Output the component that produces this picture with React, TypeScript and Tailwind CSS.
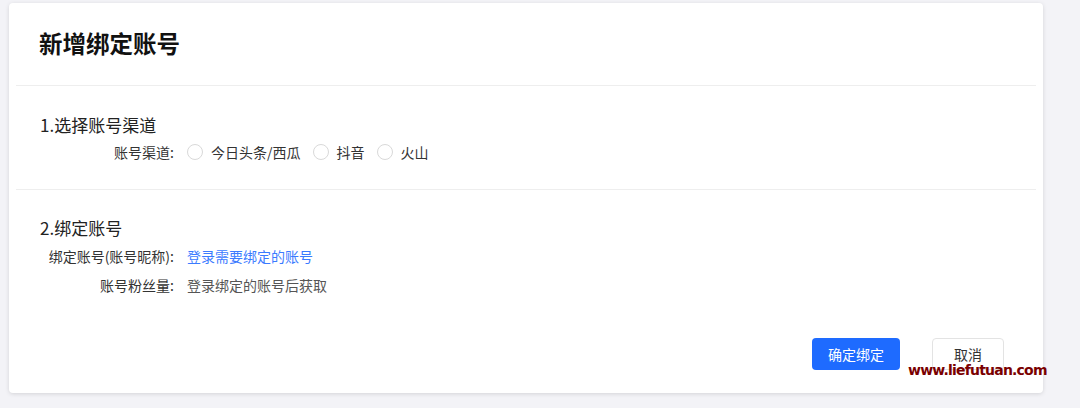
import React, { useState } from 'react';

const channels = ['今日头条/西瓜', '抖音', '火山'];

const Radio = ({ label, checked, onClick }: { label: string; checked: boolean; onClick: () => void }) => (
  <button type="button" onClick={onClick} className="flex items-center gap-2 text-[14px] text-[#333]">
    <span
      className={
        checked
          ? 'w-4 h-4 rounded-full border-[5px] border-[#1f6dff] bg-white'
          : 'w-4 h-4 rounded-full border border-[#d9d9d9] bg-white'
      }
    />
    <span>{label}</span>
  </button>
);

const App = () => {
  const [channel, setChannel] = useState<string | null>(null);

  return (
    <div
      className="relative w-[1080px] h-[408px] bg-[#f3f3f7] pt-[3px] pl-[9px]"
      style={{ fontFamily: '"Noto Sans CJK SC", "Noto Sans", sans-serif' }}
    >
      <div className="w-[1034px] h-[390px] bg-white rounded-[4px] shadow-[0_1px_4px_rgba(0,0,0,0.13)] flex flex-col">
        {/* Header */}
        <div className="h-[82px] px-[30px] flex items-center">
          <h1 className="text-[23.5px] font-bold text-[#111]">新增绑定账号</h1>
        </div>
        <div className="mx-[7px] h-px bg-[#eeeeee]" />

        {/* Step 1 */}
        <div className="mx-[7px] px-6 pt-[27px] pb-[27px]">
          <h2 className="text-[17px] leading-6 text-[#222]">1.选择账号渠道</h2>
          <div className="mt-[5px] h-5 flex items-center">
            <div className="w-[147px] pr-[13px] text-right text-[14px] text-[#333]">账号渠道:</div>
            <div className="flex items-center gap-3">
              {channels.map(c => (
                <Radio key={c} label={c} checked={channel === c} onClick={() => setChannel(c)} />
              ))}
            </div>
          </div>
        </div>
        <div className="mx-[7px] h-px bg-[#eeeeee]" />

        {/* Step 2 */}
        <div className="mx-[7px] px-6 pt-[26px]">
          <h2 className="text-[17px] leading-6 text-[#222]">2.绑定账号</h2>
          <div className="mt-[6px] h-5 flex items-center text-[14px]">
            <div className="w-[147px] pr-[13px] text-right text-[#333] whitespace-nowrap">绑定账号(账号昵称):</div>
            <a href="#" className="text-[#3b7bff]">登录需要绑定的账号</a>
          </div>
          <div className="mt-[9px] h-5 flex items-center text-[14px]">
            <div className="w-[147px] pr-[13px] text-right text-[#333]">账号粉丝量:</div>
            <span className="text-[#555]">登录绑定的账号后获取</span>
          </div>
          <div className="mt-[43px] pr-2 flex justify-end gap-8">
            <button type="button" className="w-[88px] h-8 rounded-[4px] bg-[#1e6bff] text-white text-[14px]">
              确定绑定
            </button>
            <button type="button" className="w-[72px] h-8 rounded-[4px] border border-[#e3e3e3] bg-white text-[#333] text-[14px]">
              取消
            </button>
          </div>
        </div>
      </div>

      {/* Watermark */}
      <div
        className="absolute left-[908px] top-[360px] text-[14px] leading-5 font-bold tracking-[-0.8px] text-[#7a0000]"
        style={{ fontFamily: '"DejaVu Sans", sans-serif' }}
      >
        www.liefutuan.com
      </div>
    </div>
  );
};

export default App;
